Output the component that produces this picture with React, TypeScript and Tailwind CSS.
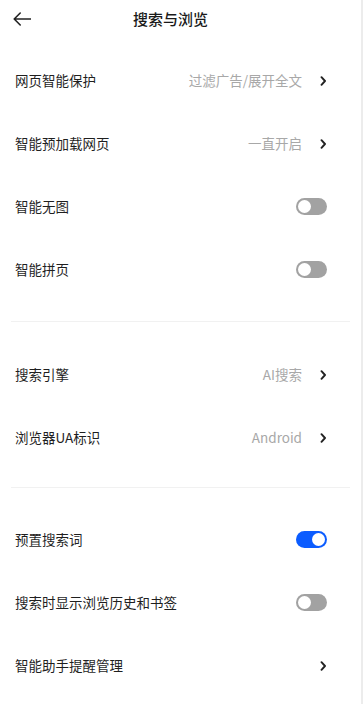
import React from "react";

const font = { fontFamily: '"Noto Sans CJK SC", "Noto Sans", sans-serif' };

function Chevron() {
  return (
    <svg width="7" height="10" viewBox="0 0 7 10" className="ml-[18px]">
      <polyline points="1.5,1.2 5,5 1.5,8.8" fill="none" stroke="#222" strokeWidth="1.9" strokeLinecap="round" strokeLinejoin="round" />
    </svg>
  );
}

function Toggle({ on }: { on?: boolean }) {
  return (
    <div className={`w-[31px] h-[17px] rounded-full flex items-center px-[2px] ${on ? "bg-[#0b5cff] justify-end" : "bg-[#a2a2a2] justify-start"}`}>
      <div className="w-[13px] h-[13px] rounded-full bg-white" />
    </div>
  );
}

function Row({ label, value, toggle, on, arrow }: { label: string; value?: string; toggle?: boolean; on?: boolean; arrow?: boolean }) {
  return (
    <div className="h-[63px] flex items-center justify-between pl-[15px] pr-[34px]">
      <span className="text-[13.5px] text-[#1f1f1f]">{label}</span>
      <div className="flex items-center">
        {value && <span className="text-[13.5px] text-[#a8a8a8]">{value}</span>}
        {arrow && <Chevron />}
        {toggle && <Toggle on={on} />}
      </div>
    </div>
  );
}

function Divider({ mt, mb }: { mt: string; mb: string }) {
  return <div className={`${mt} ${mb} mx-[11px] h-px bg-[#f1f1f1]`} />;
}

export default function App() {
  return (
    <div className="w-[363px] h-[704px] flex bg-white" style={font}>
      <div className="w-[361px] flex flex-col">
        <div className="h-[38px] flex items-center pl-[13px]">
          <svg width="18" height="14" viewBox="0 0 18 14">
            <path d="M17.5 7 H1.2 M7.2 1 L1.2 7 L7.2 13" fill="none" stroke="#222" strokeWidth="1.6" strokeLinecap="round" strokeLinejoin="round" />
          </svg>
          <span className="ml-[102px] text-[15px] font-medium text-[#1a1a1a]">搜索与浏览</span>
        </div>
        <div className="pt-[11px]">
          <Row label="网页智能保护" value="过滤广告/展开全文" arrow />
          <Row label="智能预加载网页" value="一直开启" arrow />
          <Row label="智能无图" toggle />
          <Row label="智能拼页" toggle />
        </div>
        <Divider mt="mt-[20px]" mb="mb-[21px]" />
        <Row label="搜索引擎" value="AI搜索" arrow />
        <Row label="浏览器UA标识" value="Android" arrow />
        <Divider mt="mt-[18px]" mb="mb-[20px]" />
        <Row label="预置搜索词" toggle on />
        <Row label="搜索时显示浏览历史和书签" toggle />
        <Row label="智能助手提醒管理" arrow />
      </div>
      <div className="w-[2px] bg-[#ececec]" />
    </div>
  );
}
